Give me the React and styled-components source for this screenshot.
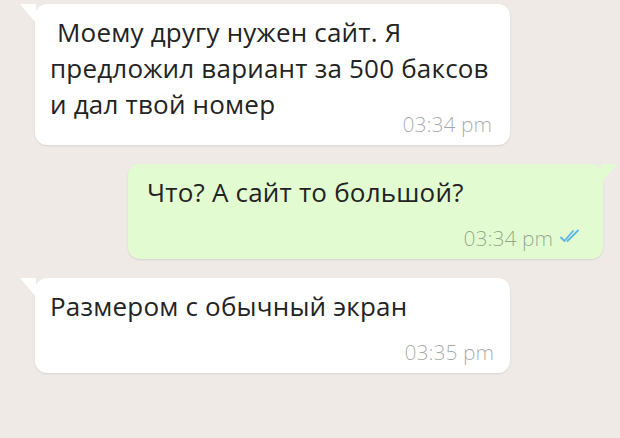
import React from "react";
import styled, { createGlobalStyle, css } from "styled-components";

const messages = [
	{
		id: 1,
		out: false,
		text: "\u00a0Моему другу нужен сайт. Я\nпредложил вариант за 500 баксов\nи дал твой номер",
		time: "03:34 pm",
		inline: true
	},
	{
		id: 2,
		out: true,
		text: "Что? А сайт то большой?",
		time: "03:34 pm",
		inline: false
	},
	{
		id: 3,
		out: false,
		text: "Размером с обычный экран",
		time: "03:35 pm",
		inline: false
	}
];

export default function App() {
	return (
		<>
			<GlobalStyle />
			<StyledChat>
				{messages.map(({ id, out, text, time, inline }) => (
					<StyledBubble key={id} $out={out}>
						<StyledText>
							{text}
							<StyledMeta $inline={inline}>
								{time}
								{out && <DoubleTick />}
							</StyledMeta>
						</StyledText>
					</StyledBubble>
				))}
			</StyledChat>
		</>
	);
}

function DoubleTick() {
	return (
		<svg width="24" height="16" viewBox="0 0 24 16" fill="none">
			<path
				d="M2 9.5 L5.5 13 L14 3"
				stroke="#5db7e6"
				strokeWidth="1.8"
				strokeLinecap="round"
				strokeLinejoin="round"
			/>
			<path
				d="M8.5 13 L19 2.5"
				stroke="#5db7e6"
				strokeWidth="1.8"
				strokeLinecap="round"
			/>
		</svg>
	);
}

const GlobalStyle = createGlobalStyle`
	html, body {
		margin: 0;
		padding: 0;
		background: #efeae5;
	}

	#root {
		min-height: 100vh;
	}
`;

const StyledChat = styled.div`
	display: flex;
	flex-direction: column;
	gap: 19px;
	padding: 4px 17px 0 35px;
	font-family: "Open Sans", "Liberation Sans", sans-serif;
`;

const StyledBubble = styled.div`
	position: relative;
	box-sizing: border-box;
	width: 475px;
	padding: 10px 16px 10px 15px;
	border-radius: 12px;
	background: #ffffff;
	box-shadow: 0 1px 2px rgba(0, 0, 0, 0.1);

	&::before {
		content: "";
		position: absolute;
		top: 0;
		left: -15px;
		width: 16px;
		height: 19px;
		background: #ffffff;
		clip-path: polygon(0 0, 100% 0, 100% 100%);
	}

	${({ $out }) =>
		$out &&
		css`
			align-self: flex-end;
			padding-left: 19px;
			padding-right: 20px;
			background: #e2fbd1;

			&::before {
				left: auto;
				right: -14px;
				background: #e2fbd1;
				clip-path: polygon(0 0, 100% 0, 0 100%);
			}
		`}
`;

const StyledText = styled.div`
	display: flow-root;
	white-space: pre-line;
	font-size: 26px;
	letter-spacing: 0.2px;
	line-height: 36px;
	color: #232323;
`;

const StyledMeta = styled.span`
	display: flex;
	align-items: center;
	justify-content: flex-end;
	gap: 6px;
	margin-top: 17px;
	font-size: 21px;
	font-weight: 300;
	letter-spacing: 0;
	line-height: 22px;
	color: rgba(0, 0, 0, 0.36);
	white-space: nowrap;

	${({ $inline }) =>
		$inline &&
		css`
			float: right;
			margin: 27px 2px 0 14px;
		`}

	svg {
		margin-top: -4px;
	}
`;
